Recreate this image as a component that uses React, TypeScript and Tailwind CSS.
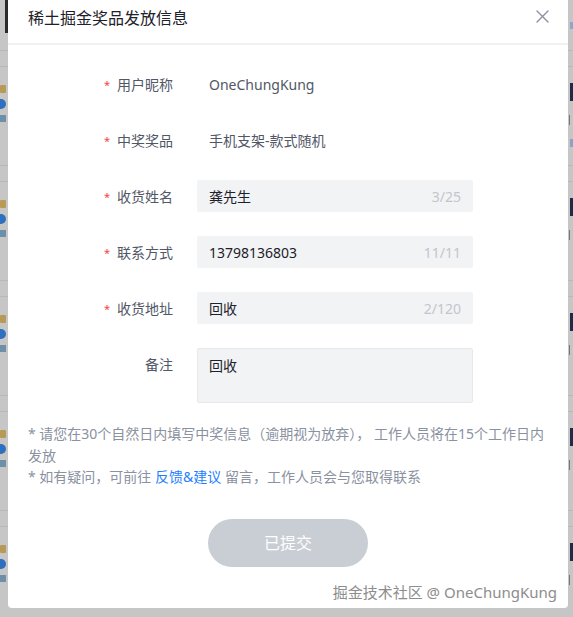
import React from 'react';

interface Field {
  label: string;
  value: string;
  type: 'static' | 'input' | 'textarea';
  required: boolean;
  counter?: string;
}

const fields: Field[] = [
  { label: '用户昵称', value: 'OneChungKung', type: 'static', required: true },
  { label: '中奖奖品', value: '手机支架-款式随机', type: 'static', required: true },
  { label: '收货姓名', value: '龚先生', type: 'input', required: true, counter: '3/25' },
  { label: '联系方式', value: '13798136803', type: 'input', required: true, counter: '11/11' },
  { label: '收货地址', value: '回收', type: 'input', required: true, counter: '2/120' },
  { label: '备注', value: '回收', type: 'textarea', required: false },
];

// dimmed feed behind the dialog
function FeedItem({ first }: { first?: boolean }) {
  return (
    <div className="h-[115px] flex flex-col">
      <div className="h-[17px] border-t border-b border-[#b9b9b9]" />
      <div className="flex-1 flex justify-between pt-[16px]">
        <div className="flex flex-col gap-[6px] pt-[2px]">
          <div className="w-[6px] h-[8px] bg-[#b79a55] rounded-[1px]" />
          <div className="w-[10px] h-[10px] -ml-[4px] bg-[#2f6fc0] rounded-full" />
          <div className="w-[6px] h-[7px] bg-[#6d8fa8]" />
        </div>
        <div className="flex flex-col gap-[14px] items-end">
          <div className="w-[3px] h-[18px] bg-[#222b45]" />
          <div className="w-[4px] h-[10px] border-l border-[#777]" />
          {first && <div className="w-[3px] h-[8px] bg-[#8aa3c4]" />}
        </div>
      </div>
    </div>
  );
}

export default function App() {
  return (
    <div className="relative w-[573px] h-[617px] overflow-hidden bg-[#c6c6c6] font-['Noto_Sans','Noto_Sans_CJK_SC',sans-serif]">
      {/* Page underneath */}
      <div className="flex flex-col">
        <div className="h-[40px] flex justify-between">
          <div className="ml-[5px] w-[3px] h-[33px] bg-[#2a2a2a]" />
          <div className="mt-[22px] w-[3px] h-[7px] bg-[#8fa6c8]" />
        </div>
        <div className="h-[10px]" />
        <FeedItem first />
        <FeedItem />
        <FeedItem />
        <FeedItem />
        <FeedItem />
      </div>

      {/* Dialog */}
      <div className="absolute left-[8px] top-0 w-[560px] h-[608px] bg-white rounded-b-[4px] flex flex-col">
        <div className="h-[45px] border-b-2 border-[#f1f1f1] flex items-start justify-between pl-[20px] pr-[19px] pt-[7px]">
          <h2 className="text-[16px] leading-[22px] text-[#1d2129]">稀土掘金奖品发放信息</h2>
          <svg width="13" height="13" viewBox="0 0 13 13" className="mt-[3px]">
            <path d="M1 1L12 12M12 1L1 12" stroke="#8a919f" strokeWidth="1.4" strokeLinecap="round" />
          </svg>
        </div>

        <div className="pt-[23px] flex flex-col gap-[24px]">
          {fields.map((f) => (
            <div key={f.label} className="flex items-start">
              <div className="w-[165px] h-[32px] flex items-center justify-end text-[14px] text-[#515767]">
                {f.required && <span className="text-[#f53f3f] mr-[7px] text-[11px] mt-[2px]">*</span>}
                {f.label}
              </div>
              {f.type === 'static' && (
                <div className="ml-[24px] h-[32px] flex items-center px-[12px] text-[14px] text-[#515767]">
                  {f.value}
                </div>
              )}
              {f.type === 'input' && (
                <div className="ml-[24px] w-[276px] h-[32px] flex items-center justify-between px-[12px] bg-[#f2f3f5] rounded-[2px] text-[14px]">
                  <span className="text-[#1d2129]">{f.value}</span>
                  <span className="text-[#c2c6cc]">{f.counter}</span>
                </div>
              )}
              {f.type === 'textarea' && (
                <div className="ml-[24px] w-[276px] h-[55px] px-[11px] pt-[6px] bg-[#f2f3f5] border border-[#e6e8eb] rounded-[2px] text-[14px] leading-[22px] text-[#1d2129]">
                  {f.value}
                </div>
              )}
            </div>
          ))}
        </div>

        <div className="mt-[20px] pl-[20px] pr-[12px] text-[14px] leading-[21.5px] text-[#8a919f]">
          <p>* 请您在30个自然日内填写中奖信息（逾期视为放弃）， 工作人员将在15个工作日内发放</p>
          <p>
            * 如有疑问，可前往 <span className="text-[#1e80ff]">反馈&amp;建议</span> 留言，工作人员会与您取得联系
          </p>
        </div>

        <div className="mt-[31px] flex justify-center">
          <button className="w-[160px] h-[48px] rounded-full bg-[#c9cdd4] text-white text-[16px]">已提交</button>
        </div>
      </div>

      {/* Watermark */}
      <div className="absolute right-[16px] top-[581px] text-[15px] leading-[22px] text-[#8d8d8d] [text-shadow:0_0_2px_#fff]">
        掘金技术社区 @ OneChungKung
      </div>
    </div>
  );
}
